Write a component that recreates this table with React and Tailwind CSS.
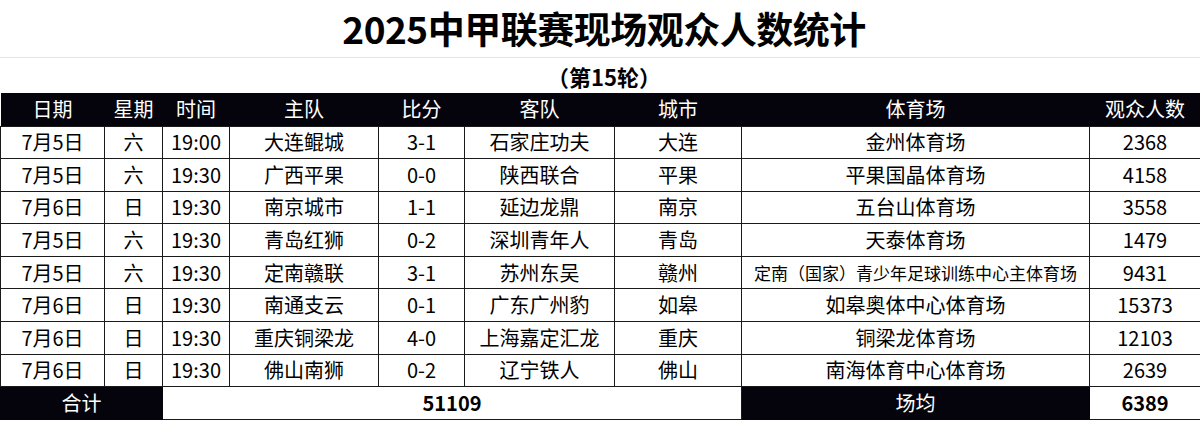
import React from 'react';

const rows = [
  ['7月5日', '六', '19:00', '大连鲲城', '3-1', '石家庄功夫', '大连', '金州体育场', '2368'],
  ['7月5日', '六', '19:30', '广西平果', '0-0', '陕西联合', '平果', '平果国晶体育场', '4158'],
  ['7月6日', '日', '19:30', '南京城市', '1-1', '延边龙鼎', '南京', '五台山体育场', '3558'],
  ['7月5日', '六', '19:30', '青岛红狮', '0-2', '深圳青年人', '青岛', '天泰体育场', '1479'],
  ['7月5日', '六', '19:30', '定南赣联', '3-1', '苏州东吴', '赣州', '定南（国家）青少年足球训练中心主体育场', '9431'],
  ['7月6日', '日', '19:30', '南通支云', '0-1', '广东广州豹', '如皋', '如皋奥体中心体育场', '15373'],
  ['7月6日', '日', '19:30', '重庆铜梁龙', '4-0', '上海嘉定汇龙', '重庆', '铜梁龙体育场', '12103'],
  ['7月6日', '日', '19:30', '佛山南狮', '0-2', '辽宁铁人', '佛山', '南海体育中心体育场', '2639'],
];

const heads = ['日期', '星期', '时间', '主队', '比分', '客队', '城市', '体育场', '观众人数'];
const widths = ['w-[104px]', 'w-[58px]', 'w-[67px]', 'w-[149px]', 'w-[86px]', 'w-[150px]', 'w-[127px]', 'w-[348px]', 'w-[111px]'];

export default function App() {
  return (
    <div
      className="w-[1200px] h-[422px] overflow-hidden bg-white text-black"
      style={{ fontFamily: '"Noto Sans CJK SC", "Noto Sans", sans-serif' }}
    >
      {/* title */}
      <div className="h-[58px] flex items-center justify-center border-b border-[#e4e4e4]">
        <h1 className="text-[37px] font-bold leading-none tracking-[-0.5px] pl-[8px]">2025中甲联赛现场观众人数统计</h1>
      </div>
      <div className="h-[35px] flex items-center justify-center">
        <span className="text-[22px] font-bold leading-none pl-[8px]">（第15轮）</span>
      </div>

      <table className="table-fixed w-[1200px] border-collapse text-[20px] leading-none">
        <colgroup>
          {widths.map((w, i) => (
            <col key={i} className={w} />
          ))}
        </colgroup>
        <thead>
          <tr className="h-[33px] bg-[#05040d] text-white">
            {heads.map((h) => (
              <th key={h} className="font-normal text-center p-0">{h}</th>
            ))}
          </tr>
        </thead>
        <tbody>
          {rows.map((r, i) => (
            <tr key={i} className="h-[32.6px]">
              {r.map((c, j) => (
                <td
                  key={j}
                  className={
                    'border-[1.5px] border-[#1a1a1a] text-center p-0 whitespace-nowrap ' +
                    (c.length > 12 ? 'text-[17px]' : '')
                  }
                >
                  {c}
                </td>
              ))}
            </tr>
          ))}
          <tr className="h-[33px]">
            <td colSpan={2} className="bg-[#05040d] text-white text-center p-0 border-[1.5px] border-[#05040d]">合计</td>
            <td colSpan={5} className="text-center p-0 font-bold border-[1.5px] border-[#1a1a1a]">51109</td>
            <td className="bg-[#05040d] text-white text-center p-0 border-[1.5px] border-[#05040d]">场均</td>
            <td className="text-center p-0 font-bold border-[1.5px] border-[#1a1a1a]">6389</td>
          </tr>
        </tbody>
      </table>
    </div>
  );
}
